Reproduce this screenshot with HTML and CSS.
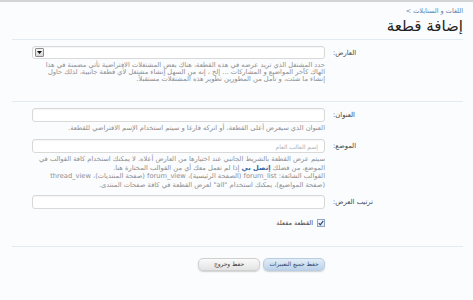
FILE: index.html
```html
<!DOCTYPE html>
<html lang="ar" dir="rtl">
<head>
<meta charset="utf-8">
<title>إضافة قطعة</title>
<link rel="stylesheet" href="styles.css">
</head>
<body>
<div class="topbar"></div>
<div class="page">
  <div class="crumbs"><a class="crumb-link" href="#">اللغات و الستايلات</a> &gt;</div>
  <h1 class="title">إضافة قطعة</h1>
  <form class="form">
    <div class="unit unit-first unit-sep">
      <label class="lbl">العارض:</label>
      <div class="ctrl">
        <div class="select"><span class="select-btn"><svg width="5" height="3" viewBox="0 0 5 3"><path d="M0 0H5L2.5 3Z" fill="#111"/></svg></span></div>
        <p class="desc">حدد المشتغل الذي تريد عرضه في هذه القطعة، هناك بعض المشتغلات الافتراضية تأتي مضمنة في هذا الهاك كآخر المواضيع و المشاركات ... إلخ ، إنه من السهل إنشاء مشتغل لأي قطعة جانبية، لذلك حاول إنشاء ما شئت، و تأمل من المطورين تطوير هذه المشتغلات مستقبلاً.</p>
      </div>
    </div>
    <div class="unit unit-title">
      <label class="lbl">العنوان:</label>
      <div class="ctrl">
        <div class="input"></div>
        <p class="desc desc-single">العنوان الذي سيعرض أعلى القطعة، أو اتركه فارغا و سيتم استخدام الإسم الافتراضي للقطعة.</p>
      </div>
    </div>
    <div class="unit unit-pos">
      <label class="lbl">الموضع:</label>
      <div class="ctrl">
        <div class="input"><span class="placeholder">إسم القالب العام</span></div>
        <p class="desc desc-tall">سيتم عرض القطعة بالشريط الجانبي عند اختيارها من العارض أعلاه. لا يمكنك استخدام كافة القوالب في الموضع، من فضلك <a class="desc-link" href="#">إتصل بي</a> إذا لم تعمل معك أي من القوالب المختارة هنا.<br>القوالب الشائعة: forum_list (الصفحة الرئيسية)، forum_view (صفحة المنتديات)، thread_view (صفحة المواضيع)، يمكنك استخدام "all" لعرض القطعة في كافة صفحات المنتدى.</p>
      </div>
    </div>
    <div class="unit unit-order">
      <label class="lbl">ترتيب العرض:</label>
      <div class="ctrl">
        <div class="input"></div>
      </div>
    </div>
    <div class="unit unit-check unit-sep">
      <span class="lbl"></span>
      <div class="ctrl">
        <label class="check"><span class="checkbox"><svg width="6" height="6" viewBox="0 0 6 6"><path d="M0.8 3.2L2.3 4.8L5.3 0.9" fill="none" stroke="#2b4a7a" stroke-width="1.2"/></svg></span>القطعة مفعلة</label>
      </div>
    </div>
    <div class="unit unit-buttons">
      <span class="lbl"></span>
      <div class="ctrl buttons">
        <button type="button" class="btn btn-primary">حفظ جميع التغييرات</button>
        <button type="button" class="btn">حفظ وخروج</button>
      </div>
    </div>
  </form>
</div>
</body>
</html>
```

FILE: styles.css
```css
* { box-sizing: border-box; }
html, body { margin: 0; padding: 0; }
body {
  background: #fbfcfe;
  font-family: "DejaVu Sans", sans-serif;
  color: #333;
  width: 473px;
  height: 300px;
  overflow: hidden;
}
.topbar {
  height: 2px;
  background: #d2d4d8;
}
.page {
  padding: 0 10px 0 12px;
}
.crumbs {
  margin-top: 6px;
  font-size: 6.5px;
  line-height: 7px;
  color: #5b7faa;
}
.crumb-link {
  color: #5b7faa;
  text-decoration: none;
}
.title {
  margin: 2px 0 0;
  font-size: 15px;
  font-weight: normal;
  line-height: 18px;
  color: #222;
  padding-bottom: 4px;
  border-bottom: 1px solid #e3ebf2;
}
.form {
  margin: 0;
}
.unit {
  display: grid;
  grid-template-columns: 130px 293px;
  column-gap: 8px;
}
.unit-sep {
  border-bottom: 1px solid #e3ebf2;
}
.unit-first {
  padding-top: 6px;
  padding-bottom: 18px;
}
.unit-title {
  padding-top: 6.5px;
}
.unit-pos {
  padding-top: 7px;
}
.unit-order {
  padding-top: 5.5px;
}
.lbl {
  text-align: left;
  font-size: 6.8px;
  line-height: 14px;
  color: #444;
}
.ctrl {
  min-width: 0;
}
.select, .input {
  height: 14px;
  background: #fff;
  border: 1px solid #d9d9d9;
  border-radius: 3px;
  box-shadow: inset 0 1px 1px rgba(0,0,0,0.04);
}
.select {
  height: 13px;
  display: flex;
  align-items: center;
  justify-content: flex-end;
  padding-left: 2px;
}
.select-btn {
  width: 9px;
  height: 9px;
  border: 1px solid #8c8c8c;
  border-radius: 1px;
  background: linear-gradient(#f6f6f6, #d6d6d6);
  display: flex;
  align-items: center;
  justify-content: center;
}
.select-btn svg { display: block; }
.input {
  display: flex;
  align-items: center;
  padding: 0 6px;
}
.placeholder {
  font-size: 6px;
  color: #b0b0b0;
}
.desc {
  margin: 2.5px 0 0;
  font-size: 6.7px;
  line-height: 7px;
  color: #8e8e8e;
}
.desc-single {
  margin-top: 3px;
}
.desc-tall {
  margin-top: 2px;
  line-height: 8.7px;
}
.desc-link {
  color: #3d63a0;
  font-weight: bold;
  text-decoration: none;
}
.unit-check {
  padding-top: 9.5px;
  padding-bottom: 19.5px;
}
.unit-check .lbl { line-height: 8px; }
.check {
  display: flex;
  align-items: center;
  gap: 4px;
  font-size: 6.5px;
  line-height: 8px;
  color: #444;
}
.checkbox {
  width: 8px;
  height: 8px;
  border: 1px solid #8fa6c4;
  background: linear-gradient(#f7f9fc, #dfe6ef);
  display: flex;
  align-items: center;
  justify-content: center;
}
.checkbox svg { display: block; }
.unit-buttons {
  padding-top: 10.5px;
}
.buttons {
  display: flex;
  gap: 3px;
}
.btn {
  width: 62px;
  height: 13px;
  padding: 0;
  border: 1px solid #d0d0d0;
  border-radius: 5px;
  background: linear-gradient(#fafafa, #e3e3e3);
  box-shadow: 0 1px 1.5px rgba(0,0,0,0.18);
  font-family: "DejaVu Sans", sans-serif;
  font-size: 5.8px;
  color: #333;
}
.btn-primary {
  border-color: #b9cde2;
  background: linear-gradient(#e3edf7, #bcd2e8);
  color: #24466f;
}
```
